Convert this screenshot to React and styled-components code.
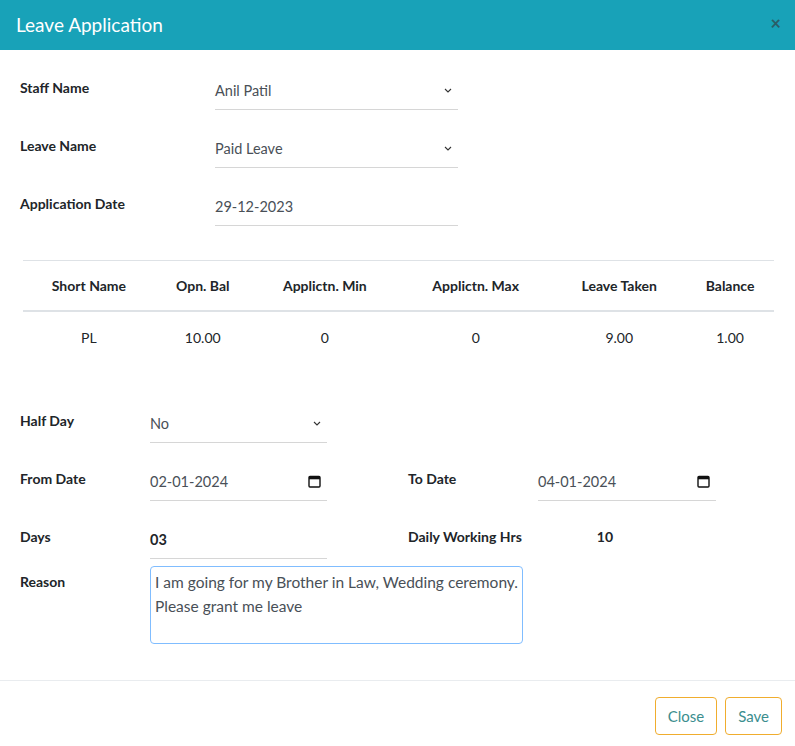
import React from "react";
import styled, { createGlobalStyle } from "styled-components";

const G = createGlobalStyle`
  body{margin:0;background:#fff;font-family:Lato,"Noto Sans",sans-serif;color:#212529;}
`;
const Modal = styled.div`width:795px;height:746px;background:#fff;display:flex;flex-direction:column;`;
const Header = styled.div`height:61px;background:#18a2b8;display:flex;align-items:center;justify-content:space-between;padding:0 14px 0 16px;box-sizing:border-box;`;
const Title = styled.div`color:#fff;font-size:19px;`;
const X = styled.div`color:#2b5d66;font-size:18px;font-weight:bold;margin-top:-4px;`;
const Body = styled.div`flex:1;padding:22px 20px 0 20px;display:flex;flex-direction:column;`;
const Row = styled.div`display:grid;grid-template-columns:${p=>p.cols};height:58px;align-items:start;`;
const Label = styled.div`font-weight:700;font-size:14px;padding-top:7px;`;
const Field = styled.div`height:38px;box-sizing:border-box;border-bottom:1px solid #d6d6d6;display:flex;align-items:center;justify-content:space-between;padding:0 6px 0 0;font-size:14.5px;color:#495057;font-weight:${p=>p.bold?700:400};${p=>p.bold?"color:#212529;":""}`;
const Value = styled.div`font-weight:700;font-size:14px;padding-top:8px;padding-left:72px;`;
const Table = styled.table`width:751px;margin:14px 0 0 3px;border-collapse:collapse;font-size:14px;border-top:1px solid #dee2e6;`;
const Th = styled.th`height:47px;font-weight:700;border-bottom:2px solid #dee2e6;text-align:center;`;
const Td = styled.td`height:50px;text-align:center;color:#212529;`;
const TextArea = styled.div`width:373px;height:78px;box-sizing:border-box;border:1px solid #80bdff;border-radius:4px;padding:3px 4px;font-size:15.5px;line-height:24px;color:#495057;position:relative;`;
const Footer = styled.div`border-top:1px solid #e9ecef;height:60px;display:flex;justify-content:flex-end;align-items:flex-start;gap:8px;padding:16px 13px 0 0;`;
const Btn = styled.button`height:38px;padding:0 12px;background:#fff;border:1px solid #f0ad2e;border-radius:4px;color:#3b8e8e;font-family:inherit;font-size:15px;`;

const Chev = () => <svg width="8" height="5" viewBox="0 0 8 5"><path d="M1 1l3 3 3-3" stroke="#333" fill="none" strokeWidth="1.1"/></svg>;
const Cal = () => <svg width="13" height="13" viewBox="0 0 13 13"><rect x="1" y="1.5" width="11" height="10.5" rx="1" fill="none" stroke="#111" strokeWidth="1.4"/><rect x="1" y="1.5" width="11" height="2.8" fill="#111"/></svg>;

export default function App(){
  return <><G/><Modal>
    <Header><Title>Leave Application</Title><X>×</X></Header>
    <Body>
      <Row cols="195px 243px"><Label>Staff Name</Label><Field>Anil Patil<Chev/></Field></Row>
      <Row cols="195px 243px"><Label>Leave Name</Label><Field>Paid Leave<Chev/></Field></Row>
      <Row cols="195px 243px"><Label>Application Date</Label><Field>29-12-2023</Field></Row>
      <Table><thead><tr>
        {["Short Name","Opn. Bal","Applictn. Min","Applictn. Max","Leave Taken","Balance"].map(h=><Th key={h}>{h}</Th>)}
      </tr></thead><tbody><tr>
        {["PL","10.00","0","0","9.00","1.00"].map((d,i)=><Td key={i}>{d}</Td>)}
      </tr></tbody></Table>
      <div style={{height:41}}/>
      <Row cols="130px 177px"><Label>Half Day</Label><Field>No<Chev/></Field></Row>
      <Row cols="130px 177px 81px 130px 178px"><Label>From Date</Label><Field>02-01-2024<Cal/></Field><span/><Label>To Date</Label><Field>04-01-2024<Cal/></Field></Row>
      <Row cols="130px 177px 81px 300px"><Label>Days</Label><Field bold>03</Field><span/><Label style={{display:"flex"}}>Daily Working Hrs<Value as="span" style={{paddingTop:0,paddingLeft:75}}>10</Value></Label></Row>
      <Row cols="130px 373px" style={{height:114,marginTop:-13}}><Label style={{paddingTop:7}}>Reason</Label><TextArea>I am going for my Brother in Law, Wedding ceremony.<br/>Please grant me leave</TextArea></Row>
    </Body>
    <Footer><Btn>Close</Btn><Btn>Save</Btn></Footer>
  </Modal></>;
}
